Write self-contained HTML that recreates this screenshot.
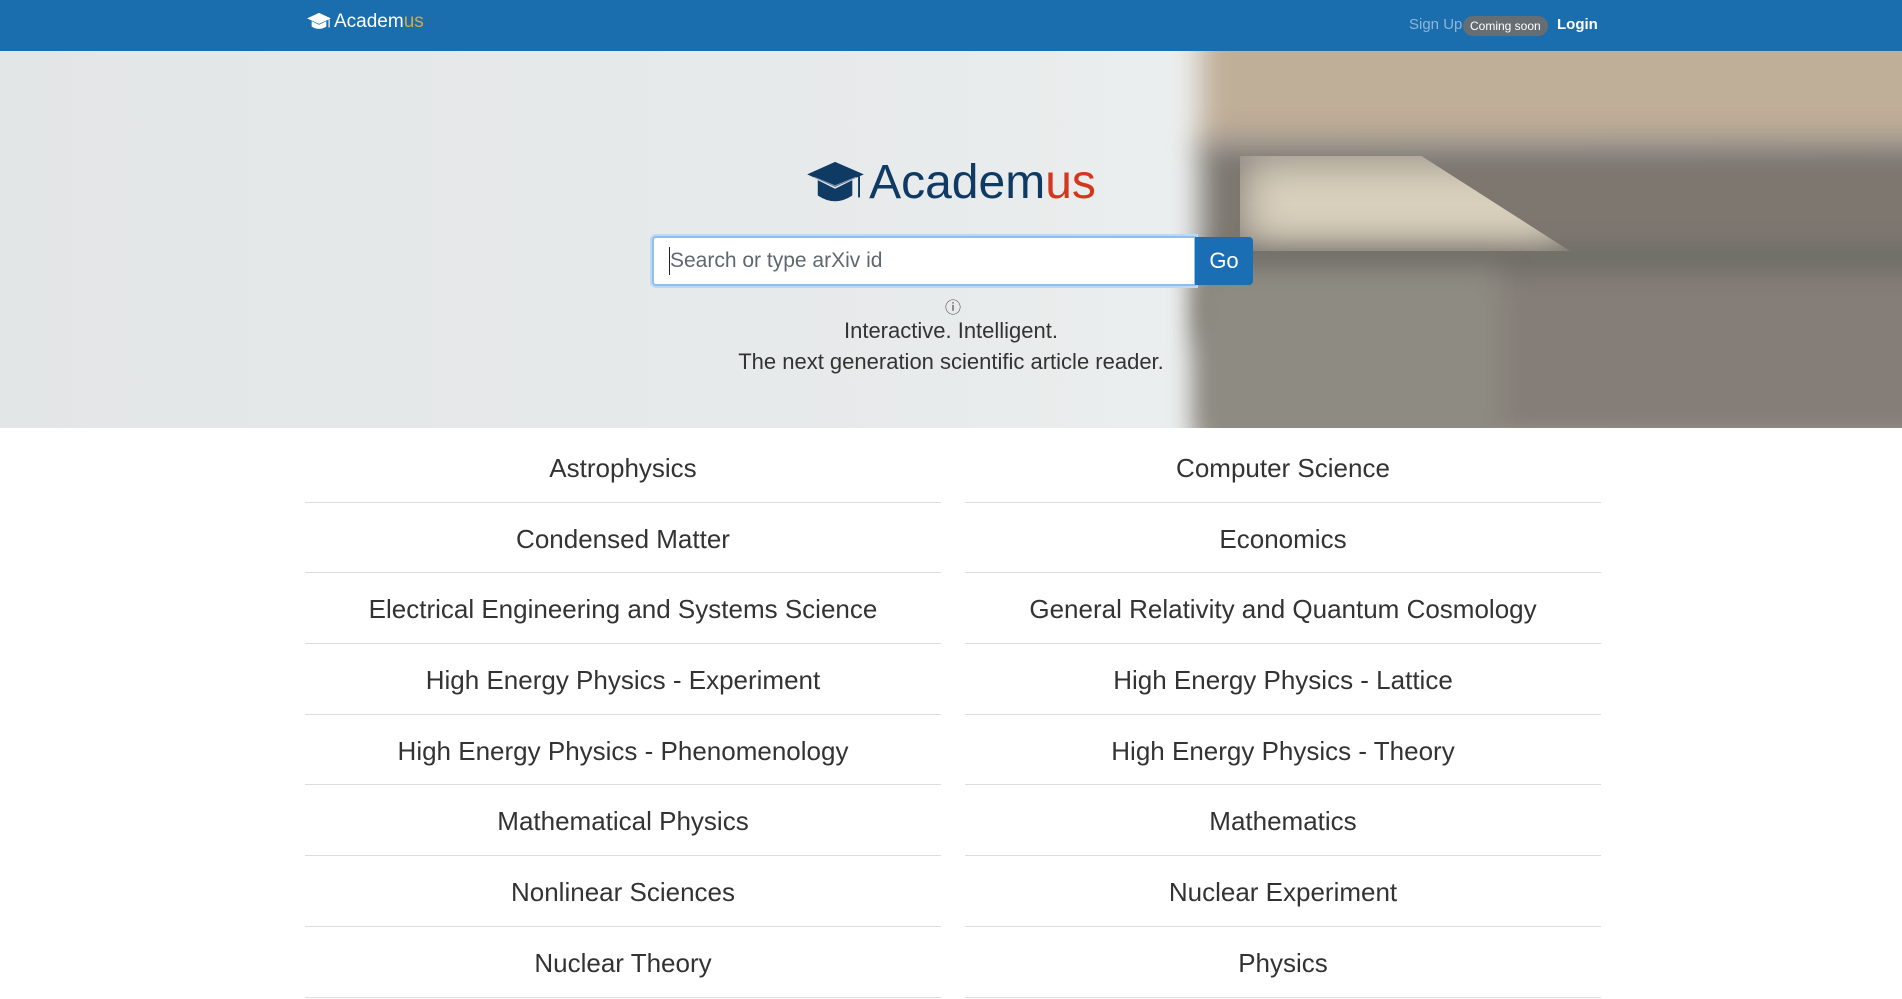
<!DOCTYPE html>
<html><head><meta charset="utf-8">
<style>
*{box-sizing:border-box;margin:0;padding:0}
body{width:1902px;height:966px;overflow:hidden;background:#fff;font-family:"Liberation Sans",sans-serif;color:#333}
.nav{position:absolute;left:0;top:0;width:1902px;height:51px;background:#1a6ead;z-index:5}
.nav .logo{position:absolute;left:306px;top:11px;display:flex;align-items:center;color:#fff;font-size:19px}
.nav .logo b{font-weight:normal;color:#d9a441}
.nav .r{position:absolute;top:16px;font-size:15px}
.hero{position:absolute;left:0;top:51px;width:1902px;height:377px;overflow:hidden;background:linear-gradient(90deg,#e3e6e7 0%,#e8ebeb 50%,#ecefef 64%,#e4e8e8 100%)}
.blk{position:absolute;filter:blur(14px)}
.center{position:absolute;left:0;width:1902px;text-align:center}
.grid{position:absolute;top:432px;left:305px;width:1296px}
.col{position:absolute;top:0;width:636px}
.row{height:70.7px;border-bottom:1px solid #ddd;text-align:center;font-size:26px;line-height:72px;color:#333}
</style></head><body>
<div class="nav">
  <div class="logo">
    <svg width="26" height="22" viewBox="0 0 28 24"><path d="M1 8 L14 2 L27 8 L14 14 Z" fill="#fff"/><path d="M6 11 V17 Q14 22 22 17 V11 L14 15 Z" fill="#fff"/><line x1="25" y1="9" x2="25" y2="18" stroke="#fff" stroke-width="1.3"/></svg>
    <span style="margin-left:2px">Academ<b>us</b></span>
  </div>
  <div class="r" style="left:1409px;color:#8fb5d6">Sign Up</div>
  <div class="r" style="left:1463px;top:16px;background:#666d73;color:#fff;font-size:12px;border-radius:10px;padding:2px 7px;height:20px;line-height:16px">Coming soon</div>
  <div class="r" style="left:1557px;color:#fff;font-weight:bold">Login</div>
</div>
<div class="hero">
  <div class="blk" style="left:1200px;top:-30px;width:760px;height:130px;background:#bfae98"></div>
  <div class="blk" style="left:1200px;top:90px;width:760px;height:200px;background:#7d7770"></div>
  <div class="blk" style="left:1240px;top:105px;width:330px;height:95px;background:#d9d0bd;clip-path:polygon(0 0,55% 0,100% 100%,0 100%);filter:blur(22px)"></div>
  <div class="blk" style="left:1200px;top:205px;width:760px;height:14px;background:#5e5f5c"></div>
  <div class="blk" style="left:1200px;top:225px;width:760px;height:170px;background:#857e78"></div>
  <div class="blk" style="left:1200px;top:220px;width:300px;height:170px;background:#8e8c82"></div>
  <div class="center" style="top:104px">
    <div style="display:inline-flex;align-items:center">
      <svg width="60" height="48" viewBox="0 0 62 50"><path d="M1 16 L30 3 L60 16 L30 29 Z" fill="#0f3a63"/><path d="M12 22 V38 Q30 50 48 38 V22 L30 31 Z" fill="#0f3a63"/><path d="M8 19 L30 28 L52 19" stroke="#8aa0b8" stroke-width="1" fill="none"/><line x1="55" y1="18" x2="55" y2="40" stroke="#0f3a63" stroke-width="2"/></svg>
      <span style="font-size:48px;color:#0f3a63;margin-left:3px">Academ<span style="color:#d5361e">us</span></span>
    </div>
  </div>
  <div style="position:absolute;left:652px;top:185px;width:544px;height:50px;background:#fff;border:2px solid #8fbef0;border-radius:4px 0 0 4px;box-shadow:0 0 0 2px #bcd8f6"></div>
  <div style="position:absolute;left:669px;top:196px;font-size:21px;color:#5f6870;line-height:28px;border-left:1.5px solid #222">Search or type arXiv id</div>
  <div style="position:absolute;left:1195px;top:186px;width:58px;height:48px;background:#1a6fb4;border-radius:0 4px 4px 0;color:#fff;font-size:22px;text-align:center;line-height:48px">Go</div>
  <div class="center" style="top:243px;font-size:16px;color:#444;left:2px">ⓘ</div>
  <div class="center" style="top:267px;font-size:22px;color:#333">Interactive. Intelligent.</div>
  <div class="center" style="top:298px;font-size:22px;color:#333">The next generation scientific article reader.</div>
</div>
<div class="grid">
  <div class="col" style="left:0">
    <div class="row">Astrophysics</div>
    <div class="row">Condensed Matter</div>
    <div class="row">Electrical Engineering and Systems Science</div>
    <div class="row">High Energy Physics - Experiment</div>
    <div class="row">High Energy Physics - Phenomenology</div>
    <div class="row">Mathematical Physics</div>
    <div class="row">Nonlinear Sciences</div>
    <div class="row">Nuclear Theory</div>
  </div>
  <div class="col" style="left:660px">
    <div class="row">Computer Science</div>
    <div class="row">Economics</div>
    <div class="row">General Relativity and Quantum Cosmology</div>
    <div class="row">High Energy Physics - Lattice</div>
    <div class="row">High Energy Physics - Theory</div>
    <div class="row">Mathematics</div>
    <div class="row">Nuclear Experiment</div>
    <div class="row">Physics</div>
  </div>
</div>
</body></html>
